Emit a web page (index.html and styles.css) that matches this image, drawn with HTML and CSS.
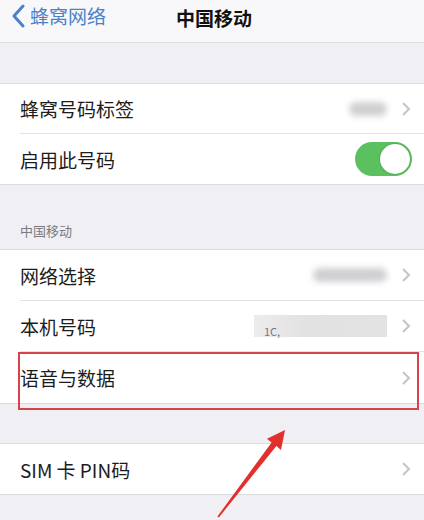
FILE: index.html
```html
<!DOCTYPE html>
<html lang="zh-CN">
<head>
  <meta charset="UTF-8" />
  <meta name="viewport" content="width=device-width, initial-scale=1.0"/>
  <title>中国移动</title>
  <link rel="stylesheet" href="styles.css">
</head>
<body>
  <div class="screen">

    <!-- Top navigation -->
    <div class="nav">
      <div class="back">
        <svg class="back-icon" width="16" height="24" viewBox="0 0 16 24">
          <polyline points="13,2 4,12 13,22" fill="none" stroke="#4a82c8" stroke-width="3" stroke-linecap="round" stroke-linejoin="round"/>
        </svg>
        <span>蜂窝网络</span>
      </div>
      <div class="nav-title">中国移动</div>
    </div>

    <div class="gap"></div>

    <div class="group">
      <div class="row">
        <span class="label">蜂窝号码标签</span>
        <span class="value blur-value short"></span>
        <svg class="chev" width="10" height="16" viewBox="0 0 10 16"><polyline points="2,2 8,8 2,14" fill="none" stroke="#c4c4c9" stroke-width="2"/></svg>
      </div>
      <div class="row">
        <span class="label">启用此号码</span>
        <span class="toggle"><span class="knob"></span></span>
      </div>
    </div>

    <div class="section-head">中国移动</div>

    <div class="group tall">
      <div class="row">
        <span class="label">网络选择</span>
        <span class="value blur-value long"></span>
        <svg class="chev" width="10" height="16" viewBox="0 0 10 16"><polyline points="2,2 8,8 2,14" fill="none" stroke="#c4c4c9" stroke-width="2"/></svg>
      </div>
      <div class="row">
        <span class="label">本机号码</span>
        <span class="value masked"><span class="masked-text">1C,</span></span>
        <svg class="chev" width="10" height="16" viewBox="0 0 10 16"><polyline points="2,2 8,8 2,14" fill="none" stroke="#c4c4c9" stroke-width="2"/></svg>
      </div>
      <div class="row">
        <span class="label">语音与数据</span>
        <svg class="chev" width="10" height="16" viewBox="0 0 10 16"><polyline points="2,2 8,8 2,14" fill="none" stroke="#c4c4c9" stroke-width="2"/></svg>
      </div>
    </div>

    <div class="gap short-gap"></div>

    <div class="group">
      <div class="row">
        <span class="label">SIM 卡 PIN码</span>
        <svg class="chev" width="10" height="16" viewBox="0 0 10 16"><polyline points="2,2 8,8 2,14" fill="none" stroke="#c4c4c9" stroke-width="2"/></svg>
      </div>
    </div>

    <!-- highlight marks -->
    <div class="mark-box"></div>
    <svg class="mark-arrow" width="424" height="520" viewBox="0 0 424 520">
      <polygon points="285,430 281,450 276.4,446 218.8,517.5 217.4,516.5 271.6,442.4 267,438.7" fill="#e2302e"/>
    </svg>
  </div>
</body>
</html>
```
FILE: styles.css
```css
* {
  box-sizing: border-box;
}

body {
  margin: 0;
  font-family: "Noto Sans CJK SC", "Noto Sans", sans-serif;
  background: #efeff4;
}

.screen {
  position: relative;
  width: 424px;
  height: 520px;
  overflow: hidden;
  background: #efeff4;
}

.nav {
  position: relative;
  height: 43px;
  background: #f8f8fa;
  border-bottom: 1px solid #dcdce0;
  display: flex;
  align-items: center;
  justify-content: center;
}

.back {
  position: absolute;
  left: 10px;
  top: 3px;
  display: flex;
  align-items: center;
  gap: 4px;
  color: #4a82c8;
  font-size: 19px;
  line-height: 26px;
}

.nav-title {
  font-size: 19px;
  font-weight: bold;
  color: #111;
  margin-top: -8px;
  margin-left: 4px;
}

.gap {
  height: 40px;
}

.short-gap {
  height: 39px;
}

.group {
  background: #fff;
  border-top: 1px solid #dcdce0;
  border-bottom: 1px solid #dcdce0;
  padding-left: 20px;
}

.row {
  height: 50px;
  display: flex;
  align-items: center;
  padding-right: 13px;
  border-bottom: 1px solid #e2e2e6;
}

.group.tall .row {
  height: 51px;
}

.row:last-child {
  border-bottom: none;
}

.label {
  flex: 1;
  font-size: 19px;
  color: #1c1c1c;
}

.value {
  margin-right: 14px;
}

.blur-value {
  height: 14px;
  background: #cfcfd2;
  border-radius: 7px;
  filter: blur(3px);
}

.blur-value.short {
  width: 38px;
}

.blur-value.long {
  width: 74px;
}

.masked {
  position: relative;
  width: 133px;
  height: 22px;
  background: linear-gradient(90deg, #ececec 0%, #e2e2e2 40%, #e3e3e3 100%);
}

.masked-text {
  position: absolute;
  left: 10px;
  bottom: -2px;
  font-size: 11px;
  color: #777;
}

.chev {
  display: block;
}

.toggle {
  width: 57px;
  height: 34px;
  border-radius: 17px;
  background: #5bc15f;
  position: relative;
  margin-right: -1px;
}

.knob {
  position: absolute;
  right: 2px;
  top: 2px;
  width: 30px;
  height: 30px;
  border-radius: 50%;
  background: #fff;
  box-shadow: 0 0 2px rgba(0, 0, 0, 0.3);
}

.section-head {
  height: 64px;
  padding: 0 20px 9px;
  display: flex;
  align-items: flex-end;
  font-size: 13px;
  color: #7a7a80;
}

/* red highlight around the voice & data row, plus pointer */
.mark-box {
  position: absolute;
  left: 18px;
  top: 352px;
  width: 401px;
  height: 58px;
  border: 2px solid #d6434b;
}

.mark-arrow {
  position: absolute;
  left: 0;
  top: 0;
}
```
